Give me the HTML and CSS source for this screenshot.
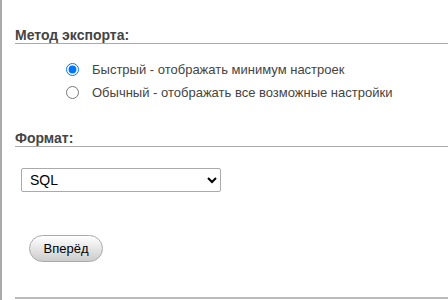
FILE: index.html
```html
<!DOCTYPE html>
<html lang="ru">
<head>
  <meta charset="UTF-8" />
  <title>Экспорт</title>
  <link rel="stylesheet" href="styles.css">
</head>
<body>
  <div class="page">
    <!-- Метод -->
    <h3 class="sect-title">Метод экспорта:</h3>
    <ul class="options">
      <li><label><input type="radio" name="method" checked> Быстрый - отображать минимум настроек</label></li>
      <li><label><input type="radio" name="method"> Обычный - отображать все возможные настройки</label></li>
    </ul>

    <!-- Формат -->
    <h3 class="sect-title fmt">Формат:</h3>
    <select class="format">
      <option>SQL</option>
      <option>CSV</option>
      <option>JSON</option>
    </select>

    <div class="actions">
      <button class="btn">Вперёд</button>
    </div>
    <div class="bottom-line"></div>
  </div>
</body>
</html>
```
FILE: styles.css
```css
body {
  margin: 0;
  font-family: 'Liberation Sans', Arial, sans-serif;
  font-size: 13px;
  color: #444;
  background: #fff;
  overflow: hidden;
}
.page {
  border-left: 2px solid #aaa;
  min-height: 300px;
  padding: 28px 0 0 13px;
  box-sizing: border-box;
}
.sect-title {
  margin: 0;
  font-size: 14px;
  line-height: 15px;
  font-weight: bold;
  color: #444;
  border-bottom: 1px solid #aaa;
}
.sect-title.fmt { margin-top: 27px; }

.options {
  list-style: none;
  margin: 14px 0 0;
  padding: 0 0 0 51px;
}
.options li {
  height: 23px;
  display: flex;
  align-items: center;
}
.options label {
  display: flex;
  align-items: center;
  gap: 13px;
}
.options input {
  margin: 0;
  width: 13px; height: 13px;
}

.format {
  display: block;
  margin: 21px 0 0 6px;
  width: 200px;
  height: 24px;
  border: 1px solid #aaa;
  border-radius: 2px;
  background: #fff;
  color: #000;
  font-family: 'Liberation Sans', Arial, sans-serif;
  font-size: 14px;
  padding: 0 4px;
}

.actions {
  margin: 43px 0 0 14px;
}
.btn {
  width: 74px;
  height: 27px;
  border: 1px solid #aaa;
  border-radius: 14px;
  background: linear-gradient(#fff, #ccc);
  color: #000;
  font-family: 'Liberation Sans', Arial, sans-serif;
  font-size: 13px;
  padding: 0;
  cursor: pointer;
}
.bottom-line {
  margin-top: 35px;
  border-top: 2px solid #bbb;
}
```
